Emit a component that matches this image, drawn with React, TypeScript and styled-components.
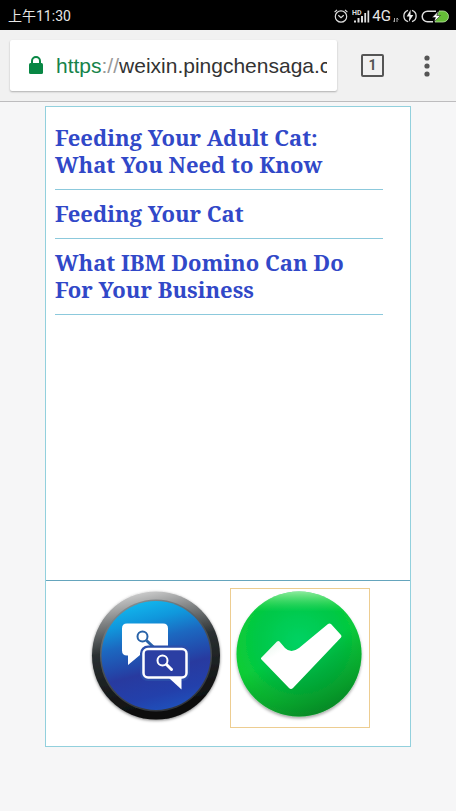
import React from 'react';
import styled, { createGlobalStyle } from 'styled-components';

const GlobalStyle = createGlobalStyle`
  *, *::before, *::after { box-sizing: border-box; }
  html { height: 100%; }
  body { margin: 0; background: #f6f6f7; }
  button { border: 0; padding: 0; background: none; cursor: pointer; }
`;

const Screen = styled.div`
  display: flex;
  flex-direction: column;
  min-height: 100vh;
  font-family: Roboto, 'Noto Sans CJK SC', sans-serif;
`;

const StatusBar = styled.div`
  display: flex;
  align-items: center;
  justify-content: space-between;
  height: 30px;
  padding: 2px 7px 0 8px;
  background: #000;
  color: #e6e6e6;
  font-size: 14px;
  line-height: 20px;
`;

const StatusIcons = styled.div`
  display: flex;
  align-items: center;
  gap: 4px;
`;

const Network = styled.span`
  display: flex;
  align-items: center;
  gap: 2px;
  font-size: 15px;
`;

const Toolbar = styled.header`
  display: flex;
  align-items: center;
  height: 72px;
  padding: 0 16px 0 10px;
  background: #f1f1f1;
  border-bottom: 1px solid #bdbcbe;
`;

const AddressBar = styled.div`
  display: flex;
  flex: 1;
  align-items: center;
  min-width: 0;
  height: 51px;
  padding: 0 10px 0 18px;
  gap: 12px;
  background: #fff;
  border-radius: 2px;
  box-shadow: 0 1px 2px rgba(0, 0, 0, 0.28);
`;

const Address = styled.a`
  flex: 1;
  overflow: hidden;
  color: #333;
  font-family: 'Liberation Sans', Arial, sans-serif;
  font-size: 21px;
  line-height: 30px;
  white-space: nowrap;
  text-decoration: none;
`;

const Scheme = styled.span`
  color: #16834a;
`;

const Slashes = styled.span`
  color: #999;
`;

const TabsButton = styled.button`
  width: 23px;
  height: 23px;
  margin-left: 24px;
  border: 2px solid #555;
  border-radius: 2px;
  color: #555;
  font: bold 14px/19px Roboto, sans-serif;
`;

const MenuButton = styled.button`
  display: flex;
  justify-content: center;
  width: 26px;
  margin-left: 30px;
`;

const Panel = styled.main`
  display: flex;
  flex: 1;
  flex-direction: column;
  margin: 4px 45px 64px;
  background: #fff;
  border: 1px solid #92d0dd;
`;

const Articles = styled.ul`
  flex: 1;
  margin: 0;
  padding: 7px 27px 0 9px;
  list-style: none;
`;

const Article = styled.li`
  padding: 10px 0 11px;
  border-bottom: 1px solid #8cc9dc;
`;

const ArticleLink = styled.a`
  display: block;
  color: #3148c8;
  font: bold 22px/27px 'Noto Serif', 'Droid Serif', 'DejaVu Serif Condensed', 'DejaVu Serif', serif;
  text-decoration: none;
`;

const Actions = styled.footer`
  display: flex;
  justify-content: center;
  gap: 4px;
  padding: 7px 0 18px;
  border-top: 1px solid #65a5bd;
`;

const ActionButton = styled.button<{ $selected?: boolean }>`
  width: 140px;
  height: 140px;
  border: 1px solid ${(p) => (p.$selected ? '#edcd91' : 'transparent')};
`;

const articles = [
  'Feeding Your Adult Cat: What You Need to Know',
  'Feeding Your Cat',
  'What IBM Domino Can Do For Your Business',
];

function AlarmIcon() {
  return (
    <svg width="14" height="14" viewBox="0 0 14 14" fill="none" stroke="#ddd" strokeWidth="1.2" aria-hidden="true">
      <circle cx="7" cy="7.500" r="5.700" />
      <path d="M.6 3.200 3 .8M13.400 3.200 11 .8M4.300 6.300 7 8.700 9.700 6.300" />
    </svg>
  );
}

function SignalIcon() {
  return (
    <svg width="18" height="15" viewBox="0 0 18 15" aria-hidden="true">
      <text x="0" y="6" fill="#ddd" fontFamily="Roboto, sans-serif" fontSize="7" fontWeight="bold">HD</text>
      <path fill="#ddd" d="M2 11.500h2v2H2zM5.500 9h2v4.500h-2zM9 7h2v6.500H9zM12.300 4h1.800v9.500h-1.800zM15.500 1.500h1.700v12h-1.700z" />
    </svg>
  );
}

function DataIcon() {
  return (
    <svg width="6" height="14" viewBox="0 0 6 14" fill="none" stroke="#aaa" aria-hidden="true">
      <path d="M1.500 9v4M0 11.500l1.500 1.500M4 13V9l1.500 1.500" />
    </svg>
  );
}

function ChargeIcon() {
  return (
    <svg width="14" height="14" viewBox="0 0 14 14" aria-hidden="true">
      <path d="M5 1.300a6 6 0 0 0 0 11.400M9 1.300a6 6 0 0 1 0 11.400" fill="none" stroke="#ddd" strokeWidth="1.300" />
      <path d="M7.600.8 3.700 7.500h2.700L5.800 13l4.500-7H7.500z" fill="#eee" />
    </svg>
  );
}

function BatteryIcon() {
  return (
    <svg width="28" height="13" viewBox="0 0 28 13" aria-hidden="true">
      <path d="M15 1.200H6.500a5.300 5.300 0 0 0 0 10.600H12" fill="none" stroke="#ddd" strokeWidth="1.500" />
      <path d="M18 1h4a5.500 5.500 0 0 1 0 11h-8z" fill="#64bd36" stroke="#bce6a7" strokeWidth=".8" />
      <path d="M17.500 1 11 7.500h3.500L13 12l6.500-6.500h-3.700z" fill="#fff" stroke="#000" strokeWidth=".5" />
    </svg>
  );
}

function LockIcon() {
  return (
    <svg width="16" height="20" viewBox="0 0 16 20" aria-hidden="true">
      <rect x="1" y="7" width="14" height="11" rx="1.500" fill="#088744" />
      <path d="M4 8V5a4 4 0 0 1 8 0v3" fill="none" stroke="#088744" strokeWidth="2" />
    </svg>
  );
}

function ChatSearchIcon() {
  return (
    <svg width="138" height="138" viewBox="0 0 138 138" aria-hidden="true">
      <defs>
        <linearGradient id="rim" x1=".35" y1="0" x2=".55" y2="1">
          <stop offset="0" stopColor="#d0d0d0" />
          <stop offset=".2" stopColor="#7c7f80" />
          <stop offset=".42" stopColor="#2a3032" />
          <stop offset="1" stopColor="#090909" />
        </linearGradient>
        <linearGradient id="bevel" x1=".2" y1="0" x2=".6" y2="1">
          <stop offset="0" stopColor="#8c9498" />
          <stop offset=".45" stopColor="#4b5257" />
          <stop offset="1" stopColor="#30343b" />
        </linearGradient>
        <linearGradient id="blue" x1=".35" y1="0" x2=".6" y2="1">
          <stop offset="0" stopColor="#12b8ee" />
          <stop offset=".18" stopColor="#1097dc" />
          <stop offset=".36" stopColor="#1c68c0" />
          <stop offset=".56" stopColor="#2348aa" />
          <stop offset=".64" stopColor="#283a9f" />
          <stop offset=".85" stopColor="#2340ab" />
          <stop offset="1" stopColor="#1f50bb" />
        </linearGradient>
        <filter id="rimShadow" x="-10%" y="-10%" width="120%" height="120%">
          <feDropShadow dx="0" dy="1" stdDeviation="1.500" floodOpacity=".5" />
        </filter>
      </defs>
      <circle cx="69" cy="66.500" r="64" fill="url(#rim)" filter="url(#rimShadow)" />
      <circle cx="69" cy="66.500" r="56" fill="url(#bevel)" />
      <circle cx="69" cy="66.500" r="54.500" fill="url(#blue)" />
      <path d="M40 34.500h36q5 0 5 5V58H64q-6 0-8 6l-3 2-12 10V66.500h-1q-5 0-5-5v-22q0-5 5-5z" fill="#fff" />
      <g fill="none" stroke="#2862a8" strokeWidth="2">
        <circle cx="55.500" cy="47.500" r="5" />
        <path d="m59.500 51.500 8 7.500" strokeWidth="3" />
      </g>
      <rect x="56.500" y="60" width="43" height="28.500" rx="4.500" fill="#2b3fa3" stroke="#2b4eaa" strokeWidth="7" />
      <rect x="56.500" y="60" width="43" height="28.500" rx="4.500" fill="#2b3fa3" stroke="#fff" strokeWidth="2.500" />
      <path d="M82 89h12.500v11.500z" fill="#fff" />
      <g fill="none" stroke="#fff" strokeWidth="2">
        <circle cx="75.500" cy="71.500" r="5" />
        <path d="m79.500 75.500 5 5" strokeWidth="3" strokeLinecap="round" />
      </g>
    </svg>
  );
}

function CheckIcon() {
  return (
    <svg width="138" height="138" viewBox="0 0 138 138" aria-hidden="true">
      <defs>
        <radialGradient id="green" cx=".5" cy=".4" r=".65">
          <stop offset="0" stopColor="#00d263" />
          <stop offset=".5" stopColor="#00c848" />
          <stop offset=".78" stopColor="#0ccc36" />
          <stop offset="1" stopColor="#19c237" />
        </radialGradient>
        <linearGradient id="shade" x1=".3" y1=".1" x2=".7" y2="1">
          <stop offset=".42" stopColor="#008020" stopOpacity="0" />
          <stop offset=".58" stopColor="#007d22" stopOpacity=".25" />
          <stop offset="1" stopColor="#00601c" stopOpacity=".65" />
        </linearGradient>
        <linearGradient id="shine" x1="0" y1="0" x2="0" y2="1">
          <stop offset="0" stopColor="#bbf5bc" stopOpacity=".75" />
          <stop offset=".16" stopColor="#65e965" stopOpacity="0" />
        </linearGradient>
        <linearGradient id="tick" x1="0" y1="0" x2=".3" y2=".4">
          <stop offset="0" stopColor="#cdeed7" />
          <stop offset="1" stopColor="#fff" />
        </linearGradient>
        <filter id="greenShadow" x="-10%" y="-10%" width="120%" height="120%">
          <feDropShadow dx="0" dy="2" stdDeviation="1.500" floodOpacity=".35" />
        </filter>
      </defs>
      <circle cx="68" cy="65" r="62.500" fill="url(#green)" filter="url(#greenShadow)" />
      <circle cx="68" cy="65" r="62.500" fill="url(#shade)" />
      <circle cx="68" cy="65" r="62.500" fill="url(#shine)" />
      <path d="M30 69 46 52.500q1.500-1 2.500 0L54 59q6 6 14 0l29-24q1.500-1 3 0l10 11q1 1 0 2.500L62 99q-2 2-4 0L30 70z" fill="url(#tick)" />
    </svg>
  );
}

export default function App() {
  return (
    <Screen>
      <GlobalStyle />
      <StatusBar>
        <time>上午11:30</time>
        <StatusIcons>
          <AlarmIcon />
          <Network>
            <SignalIcon />
            4G
            <DataIcon />
          </Network>
          <ChargeIcon />
          <BatteryIcon />
        </StatusIcons>
      </StatusBar>
      <Toolbar>
        <AddressBar>
          <LockIcon />
          <Address href="#">
            <Scheme>https</Scheme>
            <Slashes>://</Slashes>
            weixin.pingchensaga.c
          </Address>
        </AddressBar>
        <TabsButton aria-label="Open tabs: 1">1</TabsButton>
        <MenuButton aria-label="Menu">
          <svg width="6" height="22" viewBox="0 0 6 22" fill="#555" aria-hidden="true">
            <circle cx="3" cy="3" r="2.600" />
            <circle cx="3" cy="11" r="2.600" />
            <circle cx="3" cy="19" r="2.600" />
          </svg>
        </MenuButton>
      </Toolbar>
      <Panel>
        <Articles>
          {articles.map((title) => (
            <Article key={title}>
              <ArticleLink href="#">{title}</ArticleLink>
            </Article>
          ))}
        </Articles>
        <Actions>
          <ActionButton aria-label="Search conversations">
            <ChatSearchIcon />
          </ActionButton>
          <ActionButton aria-label="Confirm" $selected>
            <CheckIcon />
          </ActionButton>
        </Actions>
      </Panel>
    </Screen>
  );
}
